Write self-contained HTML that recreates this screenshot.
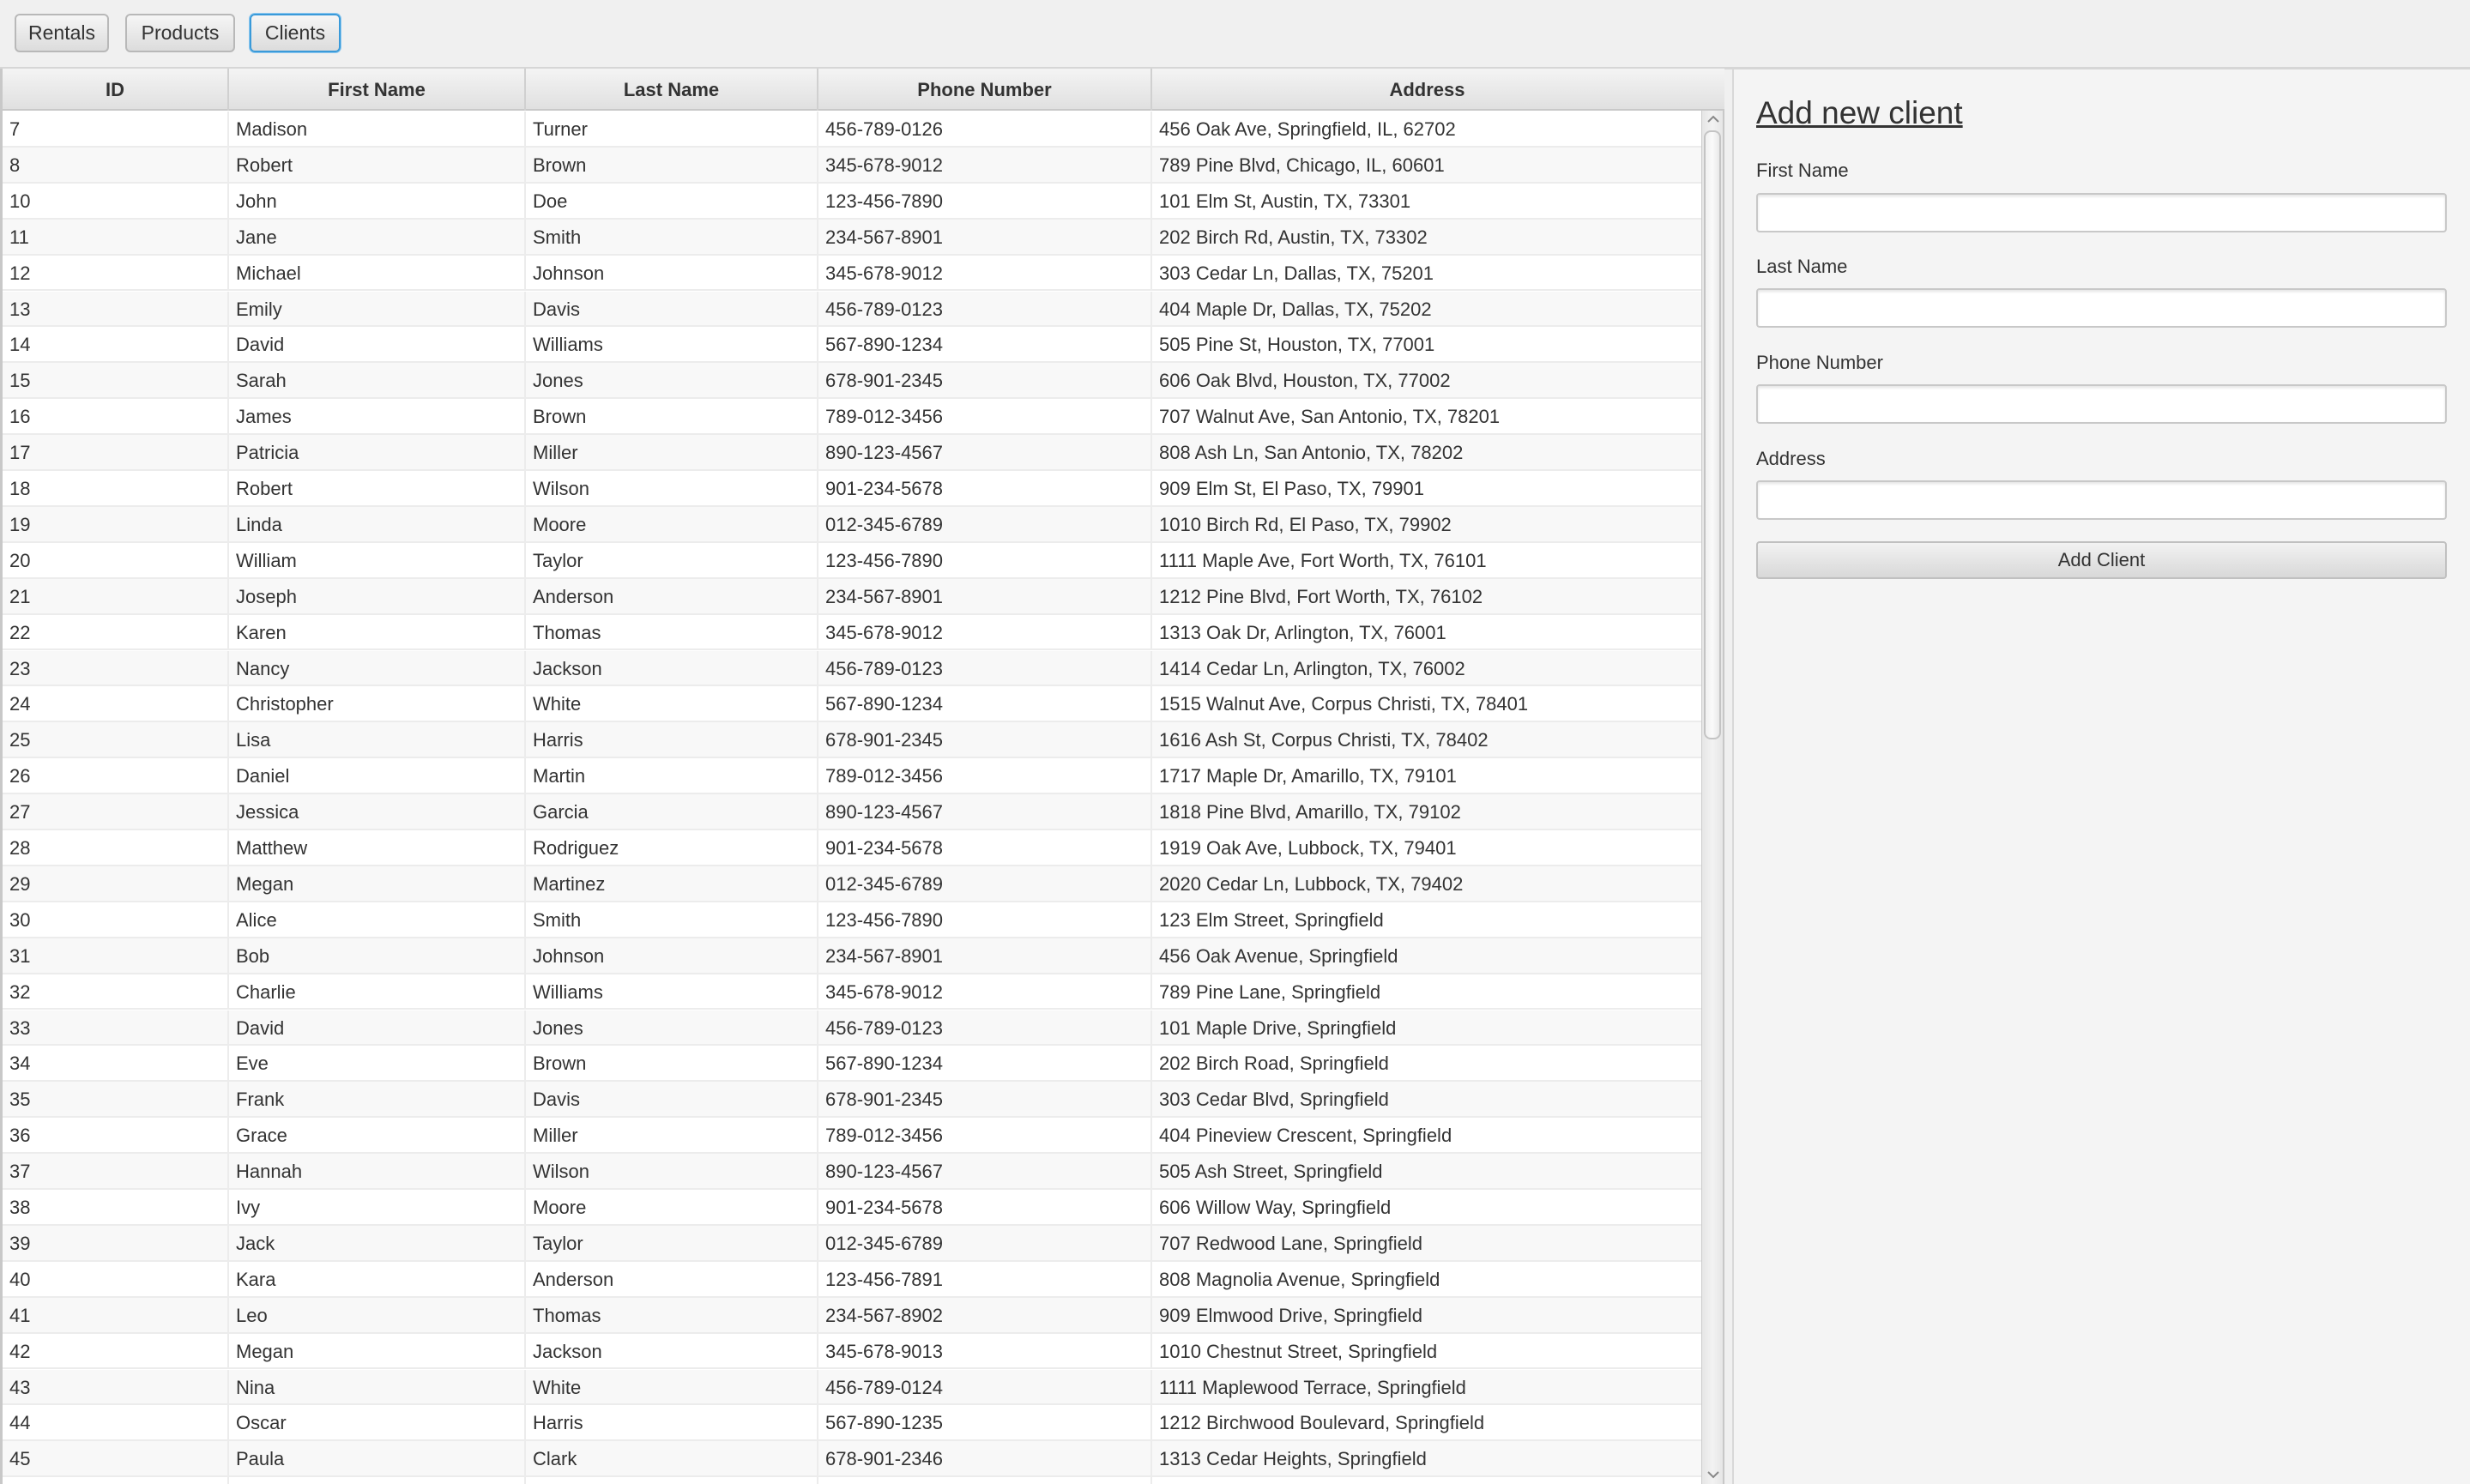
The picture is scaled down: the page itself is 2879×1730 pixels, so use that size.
<!DOCTYPE html>
<html><head><meta charset="utf-8"><style>
*{box-sizing:border-box;margin:0;padding:0}
body{width:2879px;height:1730px;overflow:hidden;background:#f0f0f0;font-family:"Liberation Sans",sans-serif;color:#333;position:relative}
.btn{position:absolute;top:16px;height:45px;border:2px solid #b8b8b8;border-radius:6px;background:linear-gradient(#f6f6f6,#dcdcdc);font-size:23px;line-height:41px;text-align:center;color:#333}
.topline{position:absolute;left:0;top:78px;width:2879px;height:3px;background:#d6d6d6}
.tbl{position:absolute;left:0;top:80px;width:1983px;height:1650px;background:#fff;overflow:hidden;border-left:3px solid #c8c8c8}
.hdr{position:absolute;left:0;top:0;height:49px;width:2010px;background:linear-gradient(#f4f4f4,#e0e0e0);border-bottom:2px solid #c8c8c8}
.hdr div{position:absolute;top:0;height:49px;line-height:50px;text-align:center;font-weight:bold;font-size:22px;border-right:2px solid #d0d0d0}
.row{position:absolute;left:0;width:1983px;height:41.9px;border-bottom:2px solid #ececec}
.row.o{background:#f8f8f8}
.row div{position:absolute;top:0;height:41.9px;line-height:41px;font-size:22px;padding-left:8px;border-right:2px solid #ececec;white-space:nowrap}
.c0{left:0;width:264px}.c1{left:264px;width:346px}.c2{left:610px;width:341px}.c3{left:951px;width:389px}.c4{left:1340px;width:643px}
.sb{position:absolute;left:1983px;top:80px;width:27px;height:1650px;background:linear-gradient(90deg,#e6e6e6,#f2f2f2,#e6e6e6);border-left:1px solid #ccc;border-right:2px solid #c8c8c8}
.sbh{position:absolute;left:1983px;top:80px;width:27px;height:49px;background:linear-gradient(#f4f4f4,#e0e0e0);border-bottom:2px solid #c8c8c8}
.thumb{position:absolute;left:1986px;top:152px;width:20px;height:710px;border:2px solid #c4c4c4;border-radius:8px;background:linear-gradient(90deg,#f0f0f0,#fafafa,#e8e8e8)}
.panel{position:absolute;left:2019px;top:81px;width:860px;height:1649px;background:#f4f4f4;border-left:2px solid #d8d8d8}
.h{position:absolute;left:2047px;top:111px;font-size:37px;text-decoration:underline;color:#333}
.lbl{position:absolute;left:2047px;font-size:22px}
.inp{position:absolute;left:2047px;width:805px;height:46px;background:#fff;border:2px solid #c8c8c8;border-radius:4px;box-shadow:inset 0 2px 3px #e4e4e4}
.add{position:absolute;left:2047px;top:631px;width:805px;height:44px;border:2px solid #c0c0c0;border-radius:4px;background:linear-gradient(#f2f2f2,#d8d8d8);text-align:center;line-height:40px;font-size:22px}
</style></head><body>
<div class="btn" style="left:17px;width:110px">Rentals</div>
<div class="btn" style="left:146px;width:128px">Products</div>
<div class="btn" style="left:291px;width:106px;border-color:#3a9ad9;box-shadow:0 0 0 1px #8cc8f0">Clients</div>
<div class="topline"></div>
<div class="tbl">
<div class="hdr"><div style="left:0;width:264px">ID</div><div style="left:264px;width:346px">First Name</div><div style="left:610px;width:341px">Last Name</div><div style="left:951px;width:389px">Phone Number</div><div style="left:1340px;width:643px">Address</div></div>
<div style="position:absolute;left:0;top:50px;width:1983px">
<div class="row" style="top:0px"><div class="c0">7</div><div class="c1">Madison</div><div class="c2">Turner</div><div class="c3">456-789-0126</div><div class="c4">456 Oak Ave, Springfield, IL, 62702</div></div>
<div class="row o" style="top:41.9px"><div class="c0">8</div><div class="c1">Robert</div><div class="c2">Brown</div><div class="c3">345-678-9012</div><div class="c4">789 Pine Blvd, Chicago, IL, 60601</div></div>
<div class="row" style="top:83.8px"><div class="c0">10</div><div class="c1">John</div><div class="c2">Doe</div><div class="c3">123-456-7890</div><div class="c4">101 Elm St, Austin, TX, 73301</div></div>
<div class="row o" style="top:125.7px"><div class="c0">11</div><div class="c1">Jane</div><div class="c2">Smith</div><div class="c3">234-567-8901</div><div class="c4">202 Birch Rd, Austin, TX, 73302</div></div>
<div class="row" style="top:167.6px"><div class="c0">12</div><div class="c1">Michael</div><div class="c2">Johnson</div><div class="c3">345-678-9012</div><div class="c4">303 Cedar Ln, Dallas, TX, 75201</div></div>
<div class="row o" style="top:209.5px"><div class="c0">13</div><div class="c1">Emily</div><div class="c2">Davis</div><div class="c3">456-789-0123</div><div class="c4">404 Maple Dr, Dallas, TX, 75202</div></div>
<div class="row" style="top:251.4px"><div class="c0">14</div><div class="c1">David</div><div class="c2">Williams</div><div class="c3">567-890-1234</div><div class="c4">505 Pine St, Houston, TX, 77001</div></div>
<div class="row o" style="top:293.3px"><div class="c0">15</div><div class="c1">Sarah</div><div class="c2">Jones</div><div class="c3">678-901-2345</div><div class="c4">606 Oak Blvd, Houston, TX, 77002</div></div>
<div class="row" style="top:335.2px"><div class="c0">16</div><div class="c1">James</div><div class="c2">Brown</div><div class="c3">789-012-3456</div><div class="c4">707 Walnut Ave, San Antonio, TX, 78201</div></div>
<div class="row o" style="top:377.1px"><div class="c0">17</div><div class="c1">Patricia</div><div class="c2">Miller</div><div class="c3">890-123-4567</div><div class="c4">808 Ash Ln, San Antonio, TX, 78202</div></div>
<div class="row" style="top:419px"><div class="c0">18</div><div class="c1">Robert</div><div class="c2">Wilson</div><div class="c3">901-234-5678</div><div class="c4">909 Elm St, El Paso, TX, 79901</div></div>
<div class="row o" style="top:460.9px"><div class="c0">19</div><div class="c1">Linda</div><div class="c2">Moore</div><div class="c3">012-345-6789</div><div class="c4">1010 Birch Rd, El Paso, TX, 79902</div></div>
<div class="row" style="top:502.8px"><div class="c0">20</div><div class="c1">William</div><div class="c2">Taylor</div><div class="c3">123-456-7890</div><div class="c4">1111 Maple Ave, Fort Worth, TX, 76101</div></div>
<div class="row o" style="top:544.7px"><div class="c0">21</div><div class="c1">Joseph</div><div class="c2">Anderson</div><div class="c3">234-567-8901</div><div class="c4">1212 Pine Blvd, Fort Worth, TX, 76102</div></div>
<div class="row" style="top:586.6px"><div class="c0">22</div><div class="c1">Karen</div><div class="c2">Thomas</div><div class="c3">345-678-9012</div><div class="c4">1313 Oak Dr, Arlington, TX, 76001</div></div>
<div class="row o" style="top:628.5px"><div class="c0">23</div><div class="c1">Nancy</div><div class="c2">Jackson</div><div class="c3">456-789-0123</div><div class="c4">1414 Cedar Ln, Arlington, TX, 76002</div></div>
<div class="row" style="top:670.4px"><div class="c0">24</div><div class="c1">Christopher</div><div class="c2">White</div><div class="c3">567-890-1234</div><div class="c4">1515 Walnut Ave, Corpus Christi, TX, 78401</div></div>
<div class="row o" style="top:712.3px"><div class="c0">25</div><div class="c1">Lisa</div><div class="c2">Harris</div><div class="c3">678-901-2345</div><div class="c4">1616 Ash St, Corpus Christi, TX, 78402</div></div>
<div class="row" style="top:754.2px"><div class="c0">26</div><div class="c1">Daniel</div><div class="c2">Martin</div><div class="c3">789-012-3456</div><div class="c4">1717 Maple Dr, Amarillo, TX, 79101</div></div>
<div class="row o" style="top:796.1px"><div class="c0">27</div><div class="c1">Jessica</div><div class="c2">Garcia</div><div class="c3">890-123-4567</div><div class="c4">1818 Pine Blvd, Amarillo, TX, 79102</div></div>
<div class="row" style="top:838px"><div class="c0">28</div><div class="c1">Matthew</div><div class="c2">Rodriguez</div><div class="c3">901-234-5678</div><div class="c4">1919 Oak Ave, Lubbock, TX, 79401</div></div>
<div class="row o" style="top:879.9px"><div class="c0">29</div><div class="c1">Megan</div><div class="c2">Martinez</div><div class="c3">012-345-6789</div><div class="c4">2020 Cedar Ln, Lubbock, TX, 79402</div></div>
<div class="row" style="top:921.8px"><div class="c0">30</div><div class="c1">Alice</div><div class="c2">Smith</div><div class="c3">123-456-7890</div><div class="c4">123 Elm Street, Springfield</div></div>
<div class="row o" style="top:963.7px"><div class="c0">31</div><div class="c1">Bob</div><div class="c2">Johnson</div><div class="c3">234-567-8901</div><div class="c4">456 Oak Avenue, Springfield</div></div>
<div class="row" style="top:1005.6px"><div class="c0">32</div><div class="c1">Charlie</div><div class="c2">Williams</div><div class="c3">345-678-9012</div><div class="c4">789 Pine Lane, Springfield</div></div>
<div class="row o" style="top:1047.5px"><div class="c0">33</div><div class="c1">David</div><div class="c2">Jones</div><div class="c3">456-789-0123</div><div class="c4">101 Maple Drive, Springfield</div></div>
<div class="row" style="top:1089.4px"><div class="c0">34</div><div class="c1">Eve</div><div class="c2">Brown</div><div class="c3">567-890-1234</div><div class="c4">202 Birch Road, Springfield</div></div>
<div class="row o" style="top:1131.3px"><div class="c0">35</div><div class="c1">Frank</div><div class="c2">Davis</div><div class="c3">678-901-2345</div><div class="c4">303 Cedar Blvd, Springfield</div></div>
<div class="row" style="top:1173.2px"><div class="c0">36</div><div class="c1">Grace</div><div class="c2">Miller</div><div class="c3">789-012-3456</div><div class="c4">404 Pineview Crescent, Springfield</div></div>
<div class="row o" style="top:1215.1px"><div class="c0">37</div><div class="c1">Hannah</div><div class="c2">Wilson</div><div class="c3">890-123-4567</div><div class="c4">505 Ash Street, Springfield</div></div>
<div class="row" style="top:1257px"><div class="c0">38</div><div class="c1">Ivy</div><div class="c2">Moore</div><div class="c3">901-234-5678</div><div class="c4">606 Willow Way, Springfield</div></div>
<div class="row o" style="top:1298.9px"><div class="c0">39</div><div class="c1">Jack</div><div class="c2">Taylor</div><div class="c3">012-345-6789</div><div class="c4">707 Redwood Lane, Springfield</div></div>
<div class="row" style="top:1340.8px"><div class="c0">40</div><div class="c1">Kara</div><div class="c2">Anderson</div><div class="c3">123-456-7891</div><div class="c4">808 Magnolia Avenue, Springfield</div></div>
<div class="row o" style="top:1382.7px"><div class="c0">41</div><div class="c1">Leo</div><div class="c2">Thomas</div><div class="c3">234-567-8902</div><div class="c4">909 Elmwood Drive, Springfield</div></div>
<div class="row" style="top:1424.6px"><div class="c0">42</div><div class="c1">Megan</div><div class="c2">Jackson</div><div class="c3">345-678-9013</div><div class="c4">1010 Chestnut Street, Springfield</div></div>
<div class="row o" style="top:1466.5px"><div class="c0">43</div><div class="c1">Nina</div><div class="c2">White</div><div class="c3">456-789-0124</div><div class="c4">1111 Maplewood Terrace, Springfield</div></div>
<div class="row" style="top:1508.4px"><div class="c0">44</div><div class="c1">Oscar</div><div class="c2">Harris</div><div class="c3">567-890-1235</div><div class="c4">1212 Birchwood Boulevard, Springfield</div></div>
<div class="row o" style="top:1550.3px"><div class="c0">45</div><div class="c1">Paula</div><div class="c2">Clark</div><div class="c3">678-901-2346</div><div class="c4">1313 Cedar Heights, Springfield</div></div>
<div class="row" style="top:1592.2px"><div class="c0"></div><div class="c1"></div><div class="c2"></div><div class="c3"></div><div class="c4"></div></div>
</div>
</div>
<div class="sb"></div>
<div class="sbh"></div>
<svg style="position:absolute;left:1988px;top:132px" width="18" height="14"><path d="M3 10 L9 4 L15 10" stroke="#888" stroke-width="2" fill="none"/></svg>
<div class="thumb"></div>
<svg style="position:absolute;left:1988px;top:1712px" width="18" height="14"><path d="M3 4 L9 10 L15 4" stroke="#888" stroke-width="2" fill="none"/></svg>
<div class="panel"></div>
<div class="h">Add new client</div>
<div class="lbl" style="top:186px">First Name</div>
<div class="inp" style="top:225px"></div>
<div class="lbl" style="top:298px">Last Name</div>
<div class="inp" style="top:336px"></div>
<div class="lbl" style="top:410px">Phone Number</div>
<div class="inp" style="top:448px"></div>
<div class="lbl" style="top:522px">Address</div>
<div class="inp" style="top:560px"></div>
<div class="add">Add Client</div>
</body></html>
